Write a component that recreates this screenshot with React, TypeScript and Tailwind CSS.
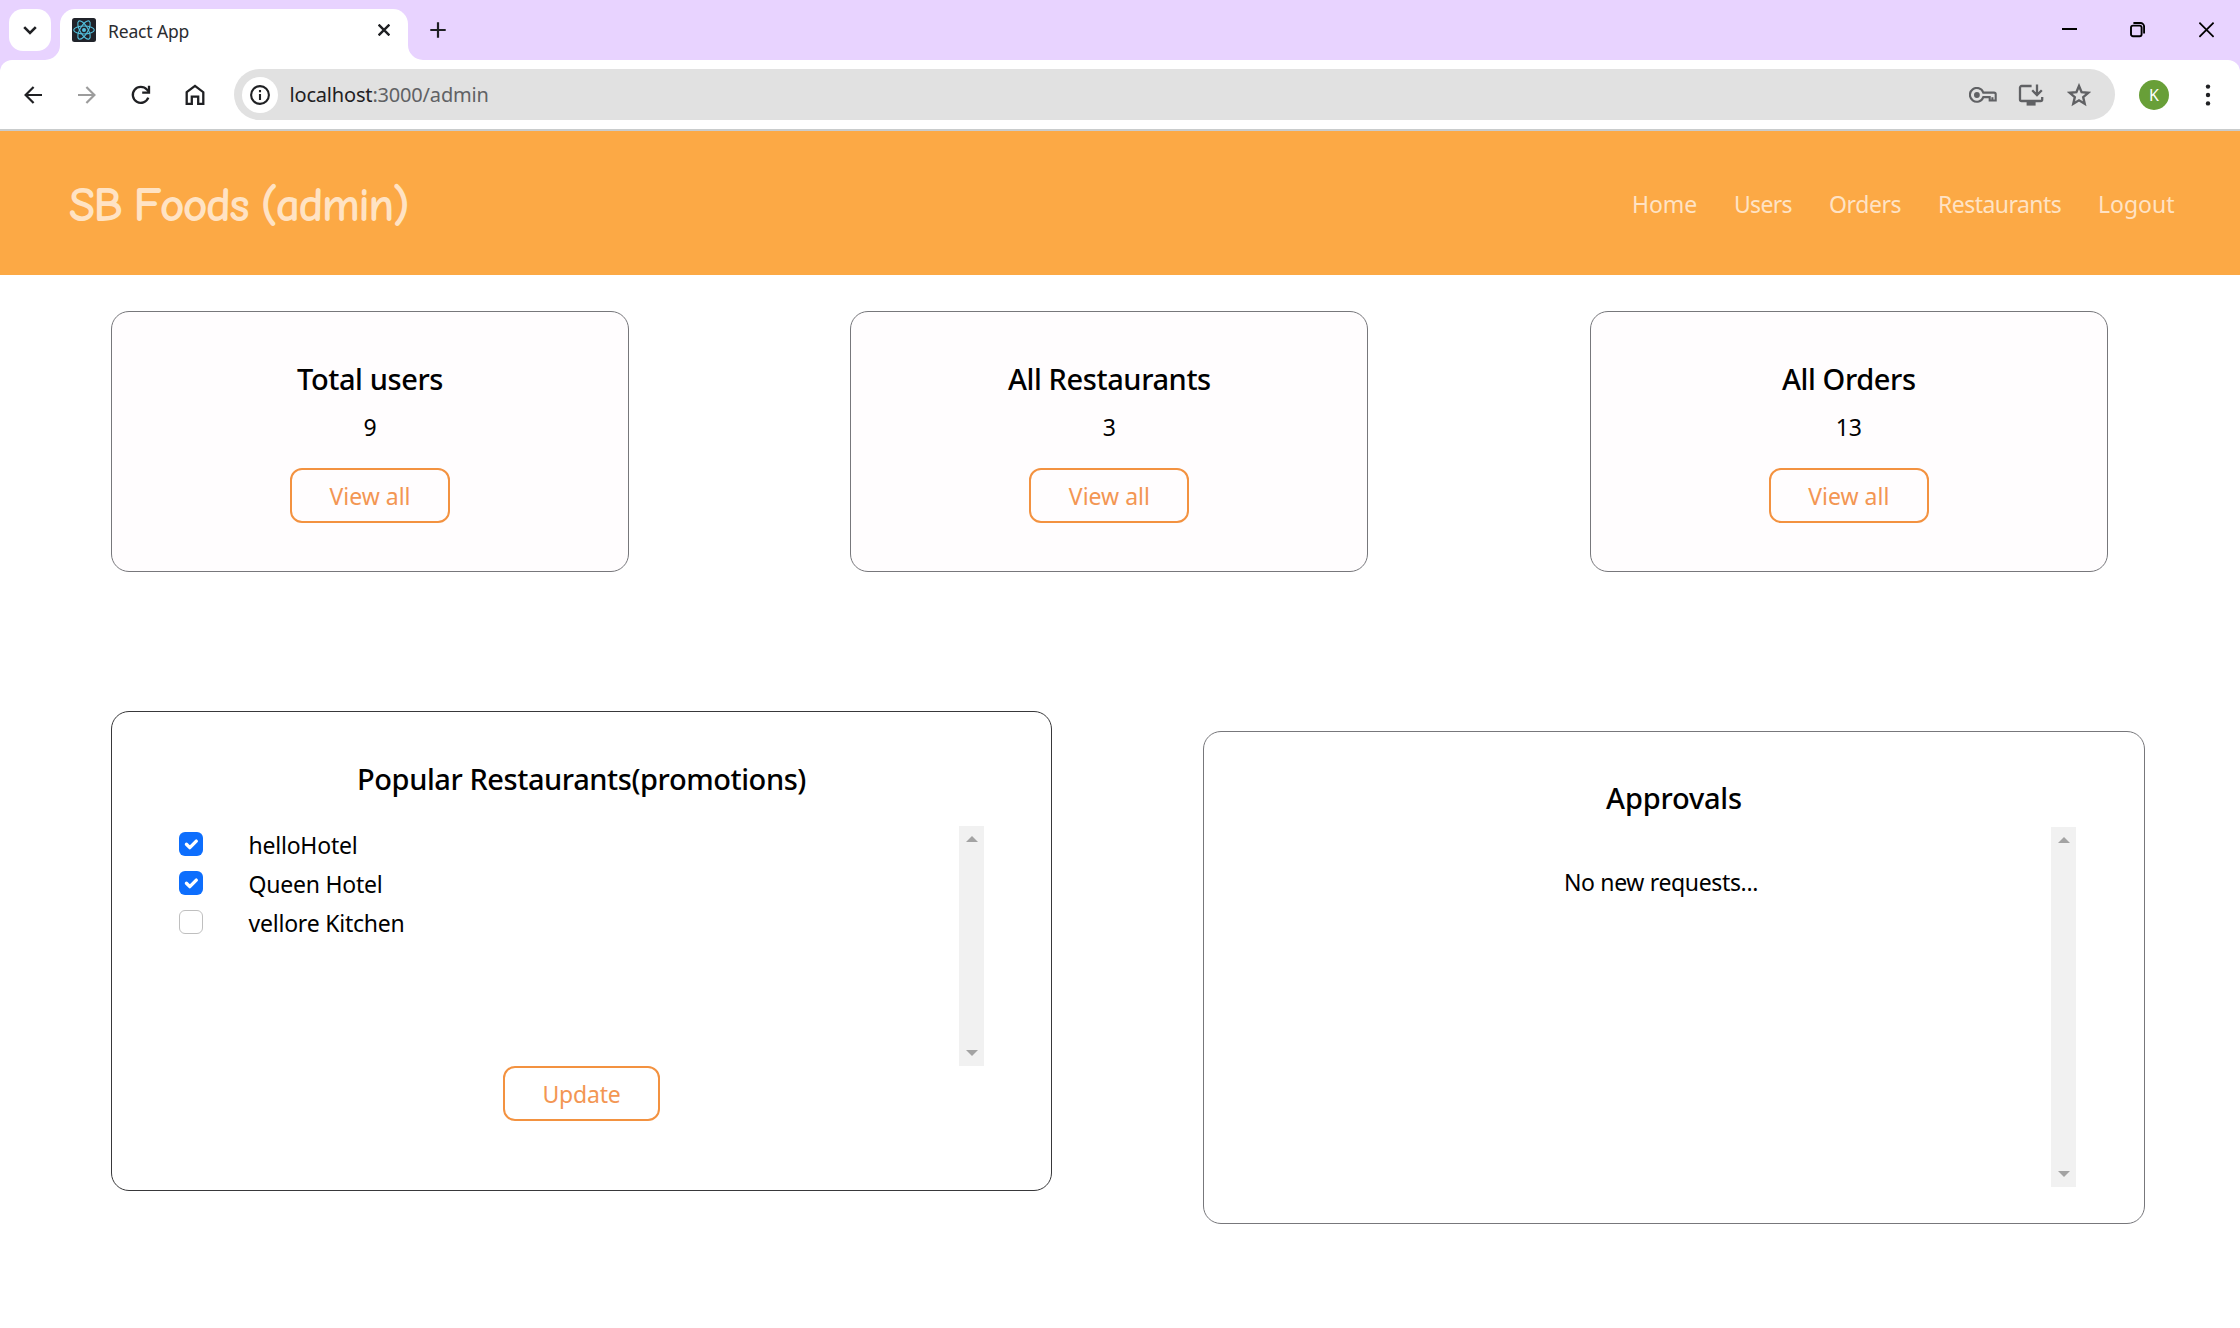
import React from "react";

const sans = "font-['Segoe_UI','Noto_Sans',sans-serif]";

function ReactLogo() {
  return (
    <svg width="24" height="24" viewBox="0 0 24 24" fill="none" stroke="#53c1de" strokeWidth="1.1">
      <rect width="24" height="24" rx="2.5" fill="#20232a" stroke="none" />
      <ellipse cx="12" cy="12" rx="10.3" ry="4" />
      <ellipse cx="12" cy="12" rx="10.3" ry="4" transform="rotate(60 12 12)" />
      <ellipse cx="12" cy="12" rx="10.3" ry="4" transform="rotate(120 12 12)" />
      <circle cx="12" cy="12" r="2" fill="#53c1de" stroke="none" />
    </svg>
  );
}

function TabStrip() {
  return (
    <div className="flex h-[60px] items-start bg-[#e8d3ff]">
      <div className="mt-[9px] ml-[9px] flex h-[42px] w-[42px] items-center justify-center rounded-[14px] bg-white">
        <svg width="14" height="9" viewBox="0 0 14 9" fill="none" stroke="#1f2023" strokeWidth="2.6">
          <path d="M1.2 1.2 7 7l5.8-5.8" />
        </svg>
      </div>
      <div className="relative mt-[9px] ml-[9px] flex h-[51px] w-[348px] items-center rounded-t-[15px] bg-white pr-[18px] pb-[15px] pl-3">
        <svg className="absolute bottom-0 -left-[15px]" width="15" height="15" viewBox="0 0 15 15">
          <path d="M15 0v15H0A15 15 0 0 0 15 0Z" fill="#fff" />
        </svg>
        <svg className="absolute -right-[15px] bottom-0" width="15" height="15" viewBox="0 0 15 15">
          <path d="M0 0v15h15A15 15 0 0 1 0 0Z" fill="#fff" />
        </svg>
        <div className="mt-[6px]"><ReactLogo /></div>
        <span className="mt-[8px] ml-[12px] flex-1 text-[17.5px] leading-6 tracking-[-0.15px] text-[#2b2c30]">React App</span>
        <svg className="mt-[6px]" width="12" height="12" viewBox="0 0 12 12" fill="none" stroke="#1f2023" strokeWidth="2.4">
          <path d="m.6.6 10.8 10.8M11.4.6.6 11.4" />
        </svg>
      </div>
      <svg className="mt-[22px] ml-[22px]" width="16" height="16" viewBox="0 0 16 16" fill="none" stroke="#1f2023" strokeWidth="2.2">
        <path d="M8 .3v15.4M.3 8h15.4" />
      </svg>
      <div className="mt-[22px] mr-[26px] ml-auto flex items-center text-black">
        <svg width="15" height="16" viewBox="0 0 15 16" fill="none" stroke="currentColor" strokeWidth="2">
          <path d="M0 7h15" />
        </svg>
        <svg className="ml-[53px]" width="15" height="16" viewBox="0 0 15 16" fill="none" stroke="currentColor" strokeWidth="1.9">
          <rect x="1" y="3.6" width="10.6" height="10.6" rx="2" />
          <path d="M3.4 1h7A3.7 3.7 0 0 1 14.1 4.7v6.8" />
        </svg>
        <svg className="ml-[54px]" width="15" height="16" viewBox="0 0 15 16" fill="none" stroke="currentColor" strokeWidth="1.7">
          <path d="m.4.7 14.2 14.2M14.6.7.4 14.9" />
        </svg>
      </div>
    </div>
  );
}

function Toolbar() {
  return (
    <div className="bg-[#e8d3ff]">
      <div className="flex h-[69px] items-center rounded-t-[12px] bg-white text-[#1f2023]">
        <svg className="ml-[24px]" width="18" height="18" viewBox="0 0 18 18" fill="none" stroke="currentColor" strokeWidth="2.2">
          <path d="M18 9H1.8M9.6 1 1.6 9l8 8" />
        </svg>
        <svg className="ml-[36px]" width="18" height="18" viewBox="0 0 18 18" fill="none" stroke="#9c9c9c" strokeWidth="2.2">
          <path d="M0 9h16.2M8.4 1l8 8-8 8" />
        </svg>
        <svg className="ml-[35px]" width="20" height="20" viewBox="0 0 20 20" fill="none" stroke="currentColor" strokeWidth="2.3">
          <path d="M17.3 12.6A8 8 0 1 1 15.9 4.6L17.8 6.6" />
          <path d="M18 .8v6.8h-6.8" />
        </svg>
        <svg className="ml-[34px]" width="20" height="22" viewBox="0 0 20 22" fill="none" stroke="currentColor" strokeWidth="2.3">
          <path d="M1.7 8.2 10 1.9l8.3 6.3v11.7h-5.1v-7.2H6.8v7.2H1.7Z" />
        </svg>
        <div className="ml-[29px] flex h-[51px] w-[1881px] items-center rounded-full bg-[#e1e1e1] pl-[7.5px]">
          <div className="flex h-[36px] w-[36px] items-center justify-center rounded-full bg-white">
            <svg width="20" height="20" viewBox="0 0 20 20" fill="none" stroke="currentColor" strokeWidth="2.1">
              <circle cx="10" cy="10" r="8.9" />
              <path d="M10 9v6M10 5v2.2" />
            </svg>
          </div>
          <span className="ml-[12px] text-[20px] leading-7 tracking-[-0.18px] text-[#606164]">
            <span className="text-[#1f2023]">localhost</span>:3000/admin
          </span>
          <div className="mr-[24px] ml-auto flex items-center text-[#606164]">
            <svg width="28" height="16" viewBox="0 0 28 16" fill="none" stroke="currentColor" strokeWidth="2.1">
              <path d="M14.3 5.6H25a1.7 1.7 0 0 1 1.7 1.7v6.2h-6v-3.4h-6.4A6.9 6.9 0 1 1 14.3 5.6Z" />
              <path d="M23.4 13.4v-3.2" />
              <circle cx="7.9" cy="8" r="2.9" fill="currentColor" stroke="none" />
            </svg>
            <svg className="ml-[21px]" width="26" height="22" viewBox="0 0 26 22" fill="none" stroke="currentColor" strokeWidth="2.3">
              <path d="M13.6 2H3.6A1.6 1.6 0 0 0 2 3.6v11.8A1.6 1.6 0 0 0 3.6 17h19a1.6 1.6 0 0 0 1.6-1.6V13M19 .6v9.6M14.2 6.2l4.8 4.8 4.8-4.8" />
              <path d="M8.6 19.6h9" strokeWidth="4" />
            </svg>
            <svg className="ml-[23px]" width="24" height="24" viewBox="0 0 24 24" fill="none" stroke="currentColor" strokeWidth="2.4">
              <path d="m12 3 2.6 6.2 6.7.6-5.1 4.4 1.5 6.6L12 17.3l-5.7 3.5 1.5-6.6-5.1-4.4 6.7-.6Z" />
            </svg>
          </div>
        </div>
        <div className="ml-[24px] flex h-[30px] w-[30px] items-center justify-center rounded-full bg-[#689f38] text-[16px] leading-none text-white">K</div>
        <svg className="ml-[36px]" width="6" height="22" viewBox="0 0 6 22" fill="currentColor">
          <circle cx="3" cy="2.6" r="2.2" /><circle cx="3" cy="11" r="2.2" /><circle cx="3" cy="19.4" r="2.2" />
        </svg>
      </div>
    </div>
  );
}

function SiteHeader() {
  return (
    <header className="flex h-[144px] items-center bg-[#fca945] pr-[65px] pl-[69px] text-[#ffe3c4]">
      <h1 className="mt-[6px] font-['Comic_Sans_MS','Comic_Neue',cursive] text-[48px] leading-[60px] font-bold tracking-[-1.7px] [word-spacing:-3px]">SB Foods (admin)</h1>
      <nav className="mt-[2px] ml-auto flex text-[23px] leading-9">
        <a className="w-[102px] tracking-[-0.1px]">Home</a>
        <a className="w-[95px] tracking-[-0.7px]">Users</a>
        <a className="w-[109px] tracking-[-0.4px]">Orders</a>
        <a className="w-[160px] tracking-[-0.55px]">Restaurants</a>
        <a className="w-[77px]">Logout</a>
      </nav>
    </header>
  );
}

function StatCard({ title, value }: { title: string; value: number }) {
  return (
    <section className="flex h-[261px] w-[518px] flex-col items-center rounded-[18px] border border-[#77777b] bg-[#fffdfe] pt-[49px]">
      <h5 className="text-[29px] leading-9 font-medium tracking-[-0.4px]">{title}</h5>
      <p className="mt-3 text-[23px] leading-9">{value}</p>
      <button className="mt-[23px] h-[55px] w-[160px] rounded-[12px] border-2 border-[#f39240] pt-[2px] text-[23px] text-[#f39653]">View all</button>
    </section>
  );
}

function Scrollbar() {
  return (
    <div className="flex h-full w-[25px] shrink-0 flex-col items-center justify-between bg-[#f1f1f1] py-[10px]">
      <svg width="12" height="6" viewBox="0 0 12 6"><path d="M6 0l6 6H0z" fill="#a3a3a3" /></svg>
      <svg width="12" height="6" viewBox="0 0 12 6"><path d="M6 6l6-6H0z" fill="#a3a3a3" /></svg>
    </div>
  );
}

function RestaurantRow({ name, checked }: { name: string; checked: boolean }) {
  return (
    <li className="flex h-[39px] items-start">
      {checked ? (
        <span className="mt-[6px] flex h-6 w-6 items-center justify-center rounded-[6px] bg-[#0d6efd]">
          <svg width="24" height="24" viewBox="0 0 20 20" fill="none" stroke="#fff" strokeWidth="2.8" strokeLinecap="round" strokeLinejoin="round">
            <path d="m6.2 10.2 2.8 2.8 5.4-5.4" />
          </svg>
        </span>
      ) : (
        <span className="mt-[6px] h-6 w-6 rounded-[6px] border border-[#bfbfbf] bg-white" />
      )}
      <span className="ml-[45.5px] text-[23px] leading-[39px] tracking-[-0.22px]">{name}</span>
    </li>
  );
}

const stats = [
  { title: "Total users", value: 9 },
  { title: "All Restaurants", value: 3 },
  { title: "All Orders", value: 13 },
];

const restaurants = [
  { name: "helloHotel", checked: true },
  { name: "Queen Hotel", checked: true },
  { name: "vellore Kitchen", checked: false },
];

export default function App() {
  return (
    <div className={`h-[1328px] w-[2240px] overflow-hidden bg-white text-black ${sans}`}>
      <TabStrip />
      <Toolbar />
      <div className="h-[2px] bg-[#c9cccd]" />
      <SiteHeader />
      <main>
        <div className="flex gap-[221.4px] pt-[36px] pl-[111px]">
          {stats.map((s) => <StatCard key={s.title} title={s.title} value={s.value} />)}
        </div>
        <div className="mt-[139px] flex items-start pl-[111px]">
          <section className="flex h-[480px] w-[941px] flex-col items-center rounded-[18px] border border-[#38383a] px-[67px] pt-[49px]">
            <h5 className="text-[29px] leading-9 font-medium tracking-[-0.42px]">Popular Restaurants(promotions)</h5>
            <div className="mt-[29px] flex h-[240px] w-full justify-between">
              <ul>{restaurants.map((r) => <RestaurantRow key={r.name} name={r.name} checked={r.checked} />)}</ul>
              <Scrollbar />
            </div>
            <button className="h-[55px] w-[157px] rounded-[12px] border-2 border-[#f39240] pt-[2px] text-[23px] tracking-[-0.2px] text-[#f39653]">Update</button>
          </section>
          <section className="mt-[20px] ml-[151px] flex h-[493px] w-[942px] flex-col items-center rounded-[18px] border border-[#77777b] pt-[48px] pr-[68px] pl-[67px]">
            <h5 className="pl-px text-[29px] leading-9 font-medium tracking-[-0.2px]">Approvals</h5>
            <div className="mt-[11px] flex h-[360px] w-full">
              <p className="flex-1 pt-[37px] text-center text-[23px] leading-9 tracking-[-0.35px]">No new requests...</p>
              <Scrollbar />
            </div>
          </section>
        </div>
      </main>
    </div>
  );
}
